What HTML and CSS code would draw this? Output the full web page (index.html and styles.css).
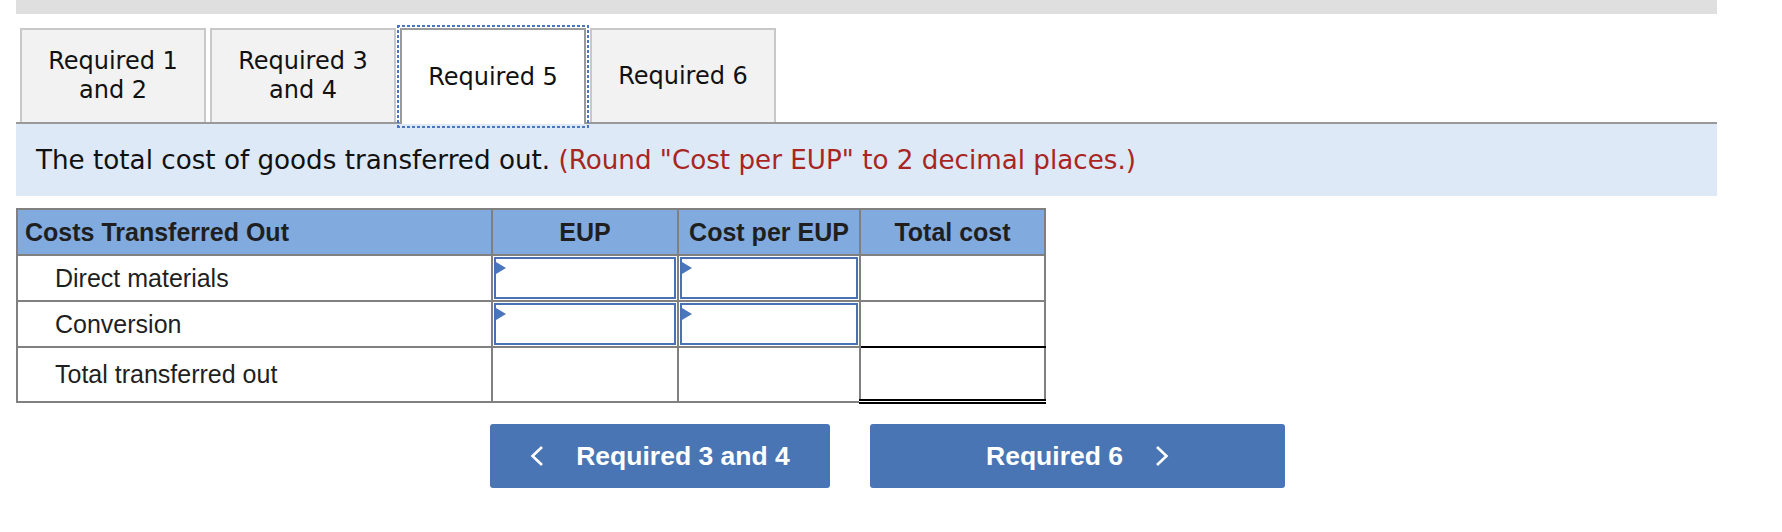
FILE: index.html
```html
<!DOCTYPE html>
<html>
<head>
<meta charset="utf-8">
<link rel="stylesheet" href="styles.css">
</head>
<body>
<div class="page">
  <div class="topbar"></div>
  <div class="tabs">
    <button class="tab">Required 1<br>and 2</button>
    <button class="tab">Required 3<br>and 4</button>
    <button class="tab active">Required 5</button>
    <button class="tab">Required 6</button>
  </div>
  <div class="panel">
    <p class="prompt">The total cost of goods transferred out. <span class="hint">(Round "Cost per EUP" to 2 decimal places.)</span></p>
  </div>
  <table class="grid">
    <colgroup>
      <col class="c-label"><col class="c-eup"><col class="c-cpe"><col class="c-total">
    </colgroup>
    <thead>
      <tr class="head">
        <th class="left">Costs Transferred Out</th>
        <th>EUP</th>
        <th>Cost per EUP</th>
        <th>Total cost</th>
      </tr>
    </thead>
    <tbody>
      <tr class="row">
        <td class="label">Direct materials</td>
        <td class="in"><div class="inp"><span class="mark"></span></div></td>
        <td class="in"><div class="inp"><span class="mark"></span></div></td>
        <td class="out"></td>
      </tr>
      <tr class="row">
        <td class="label">Conversion</td>
        <td class="in"><div class="inp"><span class="mark"></span></div></td>
        <td class="in"><div class="inp"><span class="mark"></span></div></td>
        <td class="out sum-top"></td>
      </tr>
      <tr class="row total">
        <td class="label">Total transferred out</td>
        <td></td>
        <td></td>
        <td class="out grand"></td>
      </tr>
    </tbody>
  </table>
  <div class="nav">
    <button class="navbtn prev">
      <svg class="chev" width="14" height="20" viewBox="0 0 14 20"><polyline points="12,1 2.5,10 12,19" fill="none" stroke="#fff" stroke-width="2.6" stroke-linejoin="miter"/></svg>
      <span>Required 3 and 4</span>
    </button>
    <button class="navbtn next">
      <span>Required 6</span>
      <svg class="chev" width="14" height="20" viewBox="0 0 14 20"><polyline points="2,1 11.5,10 2,19" fill="none" stroke="#fff" stroke-width="2.6" stroke-linejoin="miter"/></svg>
    </button>
  </div>
</div>
</body>
</html>
```
FILE: styles.css
```css
html, body {
  margin: 0;
  padding: 0;
  background: #ffffff;
}

.page {
  width: 1701px;
  padding-left: 16px;
}

.topbar {
  height: 14px;
  background: #dfdfdf;
}

.tabs {
  display: flex;
  gap: 4px;
  margin-top: 14px;
  padding-left: 4px;
  height: 94px;
  align-items: stretch;
}

.tab {
  width: 186px;
  box-sizing: border-box;
  border: 2px solid #c8c8c8;
  border-bottom: none;
  background: #f2f2f2;
  font-family: "DejaVu Sans", Verdana, sans-serif;
  font-size: 24px;
  line-height: 29px;
  color: #111111;
  padding: 0;
  margin: 0;
  cursor: pointer;
}

.tab.active {
  background: #ffffff;
  border-color: #9a9a9a;
  position: relative;
  z-index: 1;
  margin-bottom: -2px;
}

.tab.active::before {
  content: "";
  position: absolute;
  top: -5px;
  left: -5px;
  right: -5px;
  bottom: -4px;
  pointer-events: none;
  background:
    repeating-linear-gradient(90deg, #4a76c0 0 3px, transparent 3px 5px) top left / 100% 2px no-repeat,
    repeating-linear-gradient(90deg, #4a76c0 0 3px, transparent 3px 5px) bottom left / 100% 2px no-repeat,
    repeating-linear-gradient(180deg, #4a76c0 0 3px, transparent 3px 5px) top left / 2px 100% no-repeat,
    repeating-linear-gradient(180deg, #4a76c0 0 3px, transparent 3px 5px) top right / 2px 100% no-repeat;
}

.panel {
  border-top: 2px solid #999999;
  background: #dde9f7;
  height: 72px;
  display: flex;
  align-items: center;
  padding-left: 20px;
}

.prompt {
  margin: 0;
  font-family: "DejaVu Sans", Verdana, sans-serif;
  font-size: 26.2px;
  color: #111111;
}

.hint {
  color: #a8261f;
}

.grid {
  margin-top: 12px;
  border-collapse: collapse;
  table-layout: fixed;
  width: 1028px;
  font-family: "Liberation Sans", Arial, sans-serif;
  font-size: 25px;
  color: #1f1f1f;
}

.c-label { width: 475px; }
.c-eup { width: 186px; }
.c-cpe { width: 182px; }
.c-total { width: 185px; }

.grid th,
.grid td {
  border: 2px solid #808080;
  padding: 0;
}

.head th {
  background: #81aadf;
  height: 44px;
  font-weight: bold;
  text-align: center;
  color: #1f1f1f;
}

.head th.left {
  text-align: left;
  padding-left: 7px;
}

.row td {
  height: 43px;
}

.row.total td {
  height: 51px;
}

.label {
  padding-left: 37px !important;
}

.in {
  padding: 0 1px 1px 1px !important;
}

.inp {
  position: relative;
  height: 42px;
  box-sizing: border-box;
  border: 2px solid #4a72b3;
  background: #ffffff;
}

.mark {
  position: absolute;
  left: 0;
  top: 3px;
  width: 0;
  height: 0;
  border-top: 6px solid transparent;
  border-bottom: 6px solid transparent;
  border-left: 10px solid #4a76bd;
}

.grid td.sum-top {
  border-bottom: 2px solid #000000;
}

.grid td.grand {
  border-top: 2px solid #000000;
  border-bottom: 5px double #000000;
}

.nav {
  display: flex;
  gap: 40px;
  margin-top: 20px;
  padding-left: 474px;
}

.navbtn {
  height: 64px;
  box-sizing: border-box;
  border: none;
  border-radius: 3px;
  background: #4a75b5;
  color: #ffffff;
  font-family: "Liberation Sans", Arial, sans-serif;
  font-weight: bold;
  font-size: 26.5px;
  display: flex;
  align-items: center;
  justify-content: center;
  gap: 32px;
  padding: 0;
  margin: 0;
  cursor: pointer;
}

.navbtn.prev { width: 340px; }
.navbtn.next { width: 415px; }

.chev {
  display: block;
}
```
